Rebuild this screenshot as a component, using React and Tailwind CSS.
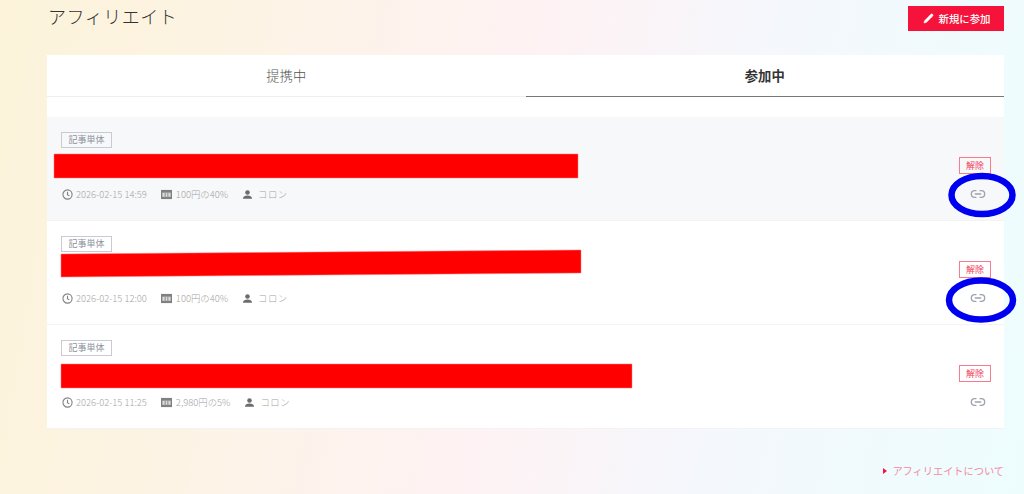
import React from 'react';
import { Pencil, Link2 } from 'lucide-react';

const rows = [
  { date: '2026-02-15 14:59', price: '100円の40%', tint: true, bar: '54,154 578,154 578,178 54,178' },
  { date: '2026-02-15 12:00', price: '100円の40%', bar: '61,254 581,250 581,273 61,277' },
  { date: '2026-02-15 11:25', price: '2,980円の5%', bar: '61,364 632,364 632,388 61,388' },
];

const ClockIcon = () => (
  <svg width="11" height="11" viewBox="0 0 24 24" fill="none" stroke="#808080" strokeWidth="2.4">
    <circle cx="12" cy="12" r="10" />
    <path d="M12 6v6.5l4 2.5" />
  </svg>
);

const TicketIcon = () => (
  <svg width="11" height="11" viewBox="0 0 24 24" fill="#808080">
    <path d="M0 2h24v20H0z" />
    <path fill="#dcdcdc" d="M3 8h18v9H3z" />
    <path d="M8 8h2v9H8zM14 8h2v9h-2z" />
  </svg>
);

const PersonIcon = () => (
  <svg width="11" height="11" viewBox="0 0 24 24" fill="#6c6c6c">
    <circle cx="12" cy="7.5" r="5" />
    <path d="M2 21c0-5 5-7 10-7s10 2 10 7z" />
  </svg>
);

const Row = ({ row }) => (
  <div className={`flex justify-between h-[104px] pl-[14px] pr-[13px] pt-[15px] border-b border-[#f3f3f3] ${row.tint ? 'bg-[#f7f8fa]' : 'bg-white'}`}>
    <div>
      <span className="block w-[51px] h-[16px] border border-[#c8cbd3] text-center text-[9px] leading-[14px] text-[#8d909a]">記事単体</span>
      <div className="h-[24px] mt-[6px]" />
      <div className="flex items-center mt-[8px] ml-[1px] text-[9.4px] leading-[16px] text-[#a4a4a4] font-light">
        <ClockIcon />
        <span className="ml-[3px]">{row.date}</span>
        <span className="ml-[14px]"><TicketIcon /></span>
        <span className="ml-[4px]">{row.price}</span>
        <span className="ml-[14px]"><PersonIcon /></span>
        <span className="ml-[5px] tracking-[0.5px]">コロン</span>
      </div>
    </div>
    <div className="flex flex-col items-end w-[32px] pt-[25px]">
      <span className="block w-[32px] h-[17px] border border-[#f77a8d] text-center text-[9px] leading-[15px] text-[#f0405c]">解除</span>
      <Link2 size={16} strokeWidth={2} className="mt-[12px] mr-[5px] text-[#9da2ac]" />
    </div>
  </div>
);

export default function App() {
  return (
    <div className="relative h-[494px] overflow-hidden pl-[47px] pr-[20px] bg-[linear-gradient(100deg,#fcf3da_0%,#fdf3e4_22%,#fef2f4_50%,#f4f8fd_72%,#edfdfd_100%)] [font-family:'Noto_Sans_CJK_JP','Noto_Sans',sans-serif]">
      <div className="flex justify-between items-start h-[55px]">
        <h1 className="mt-[3px] ml-[1px] text-[18px] leading-[26px] tracking-[0.5px] font-light text-[#333]">アフィリエイト</h1>
        <button className="flex items-center justify-center gap-[5px] w-[96px] h-[25px] mt-[6px] pl-[1px] bg-[#f5133b] text-white text-[10.4px] font-medium">
          <Pencil size={11} fill="white" strokeWidth={1} />
          新規に参加
        </button>
      </div>

      <div className="bg-white">
        <div className="flex h-[42px] border-b border-[#efefef]">
          <div className="flex-1 text-center text-[13.3px] leading-[42px] text-[#555] font-light">提携中</div>
          <div className="flex-1 -mb-px border-b border-[#777] text-center text-[13.3px] leading-[42px] font-bold text-[#333]">参加中</div>
        </div>
        <div className="h-[20px]" />
        {rows.map((row) => (
          <Row key={row.date} row={row} />
        ))}
      </div>

      <div className="flex justify-end items-center mt-[35px] text-[10.2px] leading-[14px] text-[#f58a9d]">
        <span className="mr-[5px] border-y-[3px] border-l-[4px] border-y-transparent border-l-[#f5133b]" />
        アフィリエイトについて
      </div>

      {/* red and blue marks drawn over the screenshot */}
      <svg className="absolute inset-0 pointer-events-none" width="1024" height="494">
        {rows.map((row) => (
          <polygon key={row.bar} points={row.bar} fill="#ff0000" stroke="#ff7a7a" strokeWidth="0.5" />
        ))}
        <ellipse cx="982" cy="195" rx="30.5" ry="19" fill="none" stroke="#0000f0" strokeWidth="6.5" />
        <ellipse cx="981" cy="300" rx="32" ry="19.5" fill="none" stroke="#0000f0" strokeWidth="6.5" />
      </svg>
    </div>
  );
}
